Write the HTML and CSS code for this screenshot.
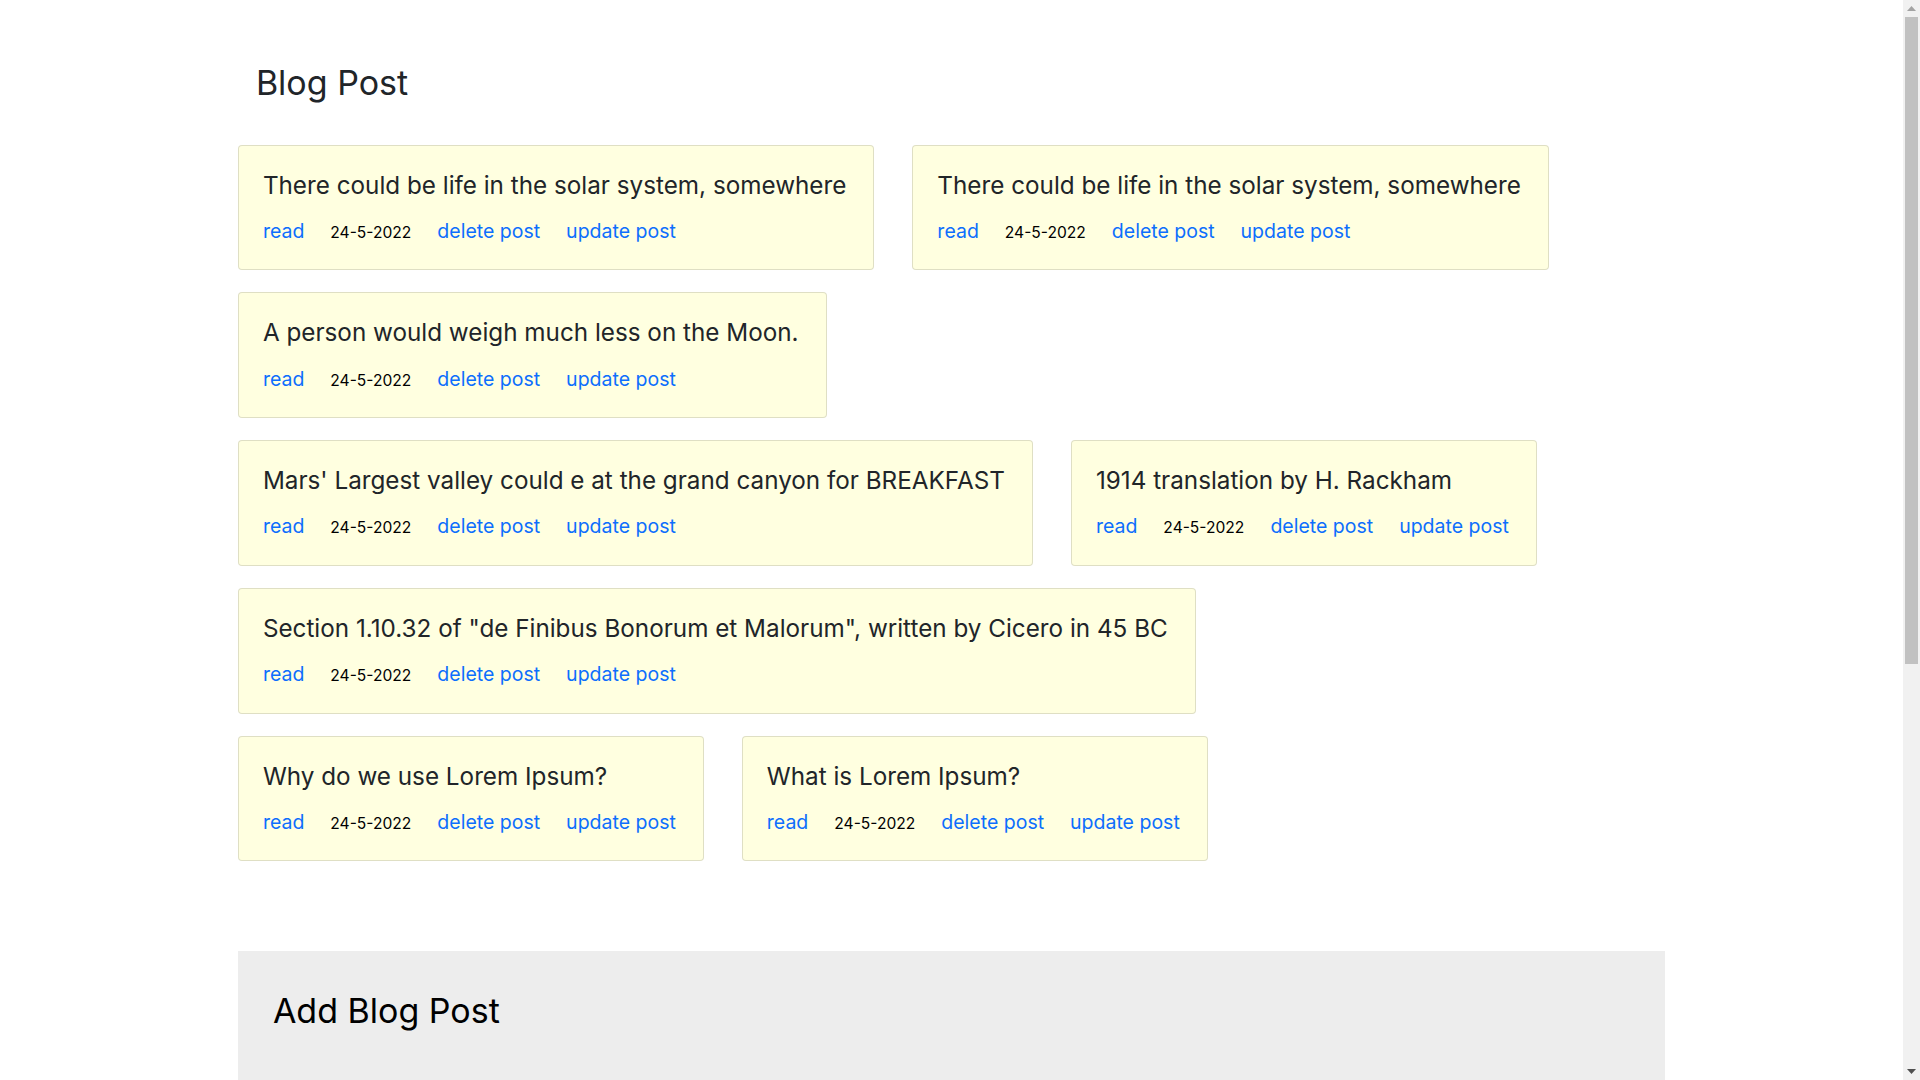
FILE: index.html
```html
<!DOCTYPE html>
<html lang="en">
<head>
<meta charset="utf-8">
<title>Blog Post</title>
<link rel="stylesheet" href="styles.css">
</head>
<body>
<main class="container">
  <h2 class="page-title">Blog Post</h2>
  <section class="posts">
    <div class="post-row">
      <article class="card">
        <h4 class="card-title">There could be life in the solar system, somewhere</h4>
        <div class="card-actions"><a href="#">read</a><span class="date">24-5-2022</span><a href="#">delete post</a><a href="#">update post</a></div>
      </article>
      <article class="card">
        <h4 class="card-title">There could be life in the solar system, somewhere</h4>
        <div class="card-actions"><a href="#">read</a><span class="date">24-5-2022</span><a href="#">delete post</a><a href="#">update post</a></div>
      </article>
    </div>
    <div class="post-row">
      <article class="card">
        <h4 class="card-title">A person would weigh much less on the Moon.</h4>
        <div class="card-actions"><a href="#">read</a><span class="date">24-5-2022</span><a href="#">delete post</a><a href="#">update post</a></div>
      </article>
    </div>
    <div class="post-row">
      <article class="card">
        <h4 class="card-title">Mars' Largest valley could e at the grand canyon for BREAKFAST</h4>
        <div class="card-actions"><a href="#">read</a><span class="date">24-5-2022</span><a href="#">delete post</a><a href="#">update post</a></div>
      </article>
      <article class="card">
        <h4 class="card-title">1914 translation by H. Rackham</h4>
        <div class="card-actions"><a href="#">read</a><span class="date">24-5-2022</span><a href="#">delete post</a><a href="#">update post</a></div>
      </article>
    </div>
    <div class="post-row">
      <article class="card">
        <h4 class="card-title">Section 1.10.32 of "de Finibus Bonorum et Malorum", written by Cicero in 45 BC</h4>
        <div class="card-actions"><a href="#">read</a><span class="date">24-5-2022</span><a href="#">delete post</a><a href="#">update post</a></div>
      </article>
    </div>
    <div class="post-row">
      <article class="card">
        <h4 class="card-title">Why do we use Lorem Ipsum?</h4>
        <div class="card-actions"><a href="#">read</a><span class="date">24-5-2022</span><a href="#">delete post</a><a href="#">update post</a></div>
      </article>
      <article class="card">
        <h4 class="card-title">What is Lorem Ipsum?</h4>
        <div class="card-actions"><a href="#">read</a><span class="date">24-5-2022</span><a href="#">delete post</a><a href="#">update post</a></div>
      </article>
    </div>
  </section>

  <section class="add-post">
    <h2 class="add-title">Add Blog Post</h2>
  </section>
</main>

<div class="scrollbar" aria-hidden="true">
  <div class="sb-btn">
    <svg width="9" height="5" viewBox="0 0 9 5"><path d="M0 5 L4.5 0 L9 5 Z" fill="#a3a3a3"/></svg>
  </div>
  <div class="sb-track"><div class="sb-thumb"></div></div>
  <div class="sb-btn">
    <svg width="9" height="5" viewBox="0 0 9 5"><path d="M0 0 L9 0 L4.5 5 Z" fill="#505050"/></svg>
  </div>
</div>
</body>
</html>
```
FILE: styles.css
```css
* { box-sizing: border-box; }

html, body {
  margin: 0;
  padding: 0;
  background: #fff;
}

body {
  padding-right: 17px;
  font-family: "Inter", "Noto Sans", sans-serif;
  color: #212529;
}

.container {
  width: 75%;
  margin: 0 auto;
  padding-bottom: 60px;
}

.page-title {
  margin: 0;
  padding: 63px 0 0 18px;
  font-size: 34px;
  font-weight: 400;
  line-height: 1.2;
  color: #212529;
}

.posts {
  margin-top: 41px;
  display: flex;
  flex-direction: column;
  gap: 22px;
}

.post-row {
  display: flex;
  align-items: flex-start;
  gap: 38px;
}

.card {
  background: #ffffe0;
  border: 1px solid rgba(0, 0, 0, 0.125);
  border-radius: 4px;
  padding: 25px 27px 24px 24px;
}

.card-title {
  margin: 0 0 17px;
  font-size: 24.25px;
  font-weight: 400;
  line-height: 1.2;
  color: #212529;
  white-space: nowrap;
}

.card-actions {
  display: flex;
  align-items: baseline;
  gap: 26px;
  height: 28.6px;
  line-height: 1.46;
  white-space: nowrap;
}

.card-actions a {
  font-size: 19.5px;
  color: #0d6efd;
  text-decoration: none;
}

.card-actions .date {
  font-size: 15.6px;
  color: #000;
}

.add-post {
  margin-top: 90px;
  min-height: 560px;
  background: #ededed;
  padding: 40px 35px;
}

.add-title {
  margin: 0;
  font-size: 34px;
  font-weight: 400;
  line-height: 1.2;
  color: #000;
}

/* drawn browser scrollbar (the page is taller than the window) */
.scrollbar {
  position: fixed;
  top: 0;
  right: 0;
  width: 17px;
  height: 100vh;
  background: #f1f1f1;
  display: flex;
  flex-direction: column;
}

.sb-btn {
  height: 17px;
  flex: 0 0 17px;
  display: flex;
  align-items: center;
  justify-content: center;
}

.sb-track {
  flex: 1;
  padding: 0 2px;
}

.sb-thumb {
  height: 647px;
  background: #c1c1c1;
}
```
